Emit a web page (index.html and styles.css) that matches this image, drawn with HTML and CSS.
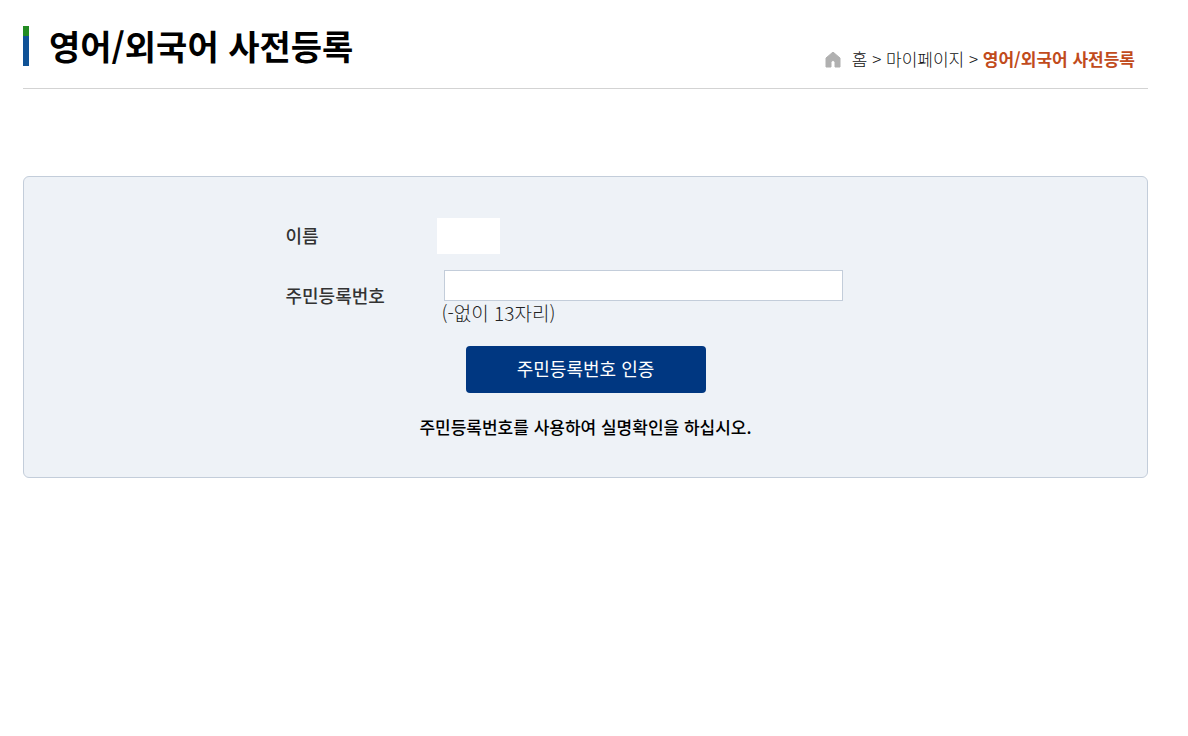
FILE: index.html
```html
<!DOCTYPE html>
<html lang="ko">
<head>
<meta charset="utf-8">
<meta name="viewport" content="width=device-width, initial-scale=1">
<title>영어/외국어 사전등록</title>
<link rel="stylesheet" href="styles.css">
</head>
<body>
<main class="page">
  <header class="page-header">
    <h1 class="page-title">영어/외국어 사전등록</h1>
    <nav class="breadcrumb" aria-label="현재 위치">
      <svg class="home-icon" viewBox="0 0 16 16" aria-hidden="true"><path d="M8 0 L15 6 V15 H10 V10.5 A2 2 0 0 0 6 10.5 V15 H1 V6 Z" fill="#b0b0b0" stroke="#b0b0b0" stroke-linejoin="round"/></svg>
      <a href="#">홈</a> &gt; <a href="#">마이페이지</a> &gt; <strong class="current">영어/외국어 사전등록</strong>
    </nav>
  </header>
  <form class="panel">
    <div class="fields">
      <label class="label" for="name">이름</label>
      <output class="name-value" id="name"></output>
      <label class="label label-rrn" for="rrn">주민등록번호</label>
      <div class="rrn">
        <input class="rrn-input" id="rrn" type="text" maxlength="13" aria-describedby="rrn-hint">
        <span class="hint" id="rrn-hint">(-없이 13자리)</span>
      </div>
    </div>
    <button class="submit" type="button">주민등록번호 인증</button>
    <p class="notice">주민등록번호를 사용하여 실명확인을 하십시오.</p>
  </form>
</main>
</body>
</html>
```
FILE: styles.css
```css
* {
  box-sizing: border-box;
}

body {
  margin: 0;
  background: #fff;
  color: #333;
  font-family: "Noto Sans CJK KR", sans-serif;
}

.page {
  padding: 20px 40px 20px 23px;
}

.page-header {
  display: flex;
  justify-content: space-between;
  align-items: flex-end;
  padding: 0 13px 16px 0;
  border-bottom: 1px solid #d3d3d3;
}

.page-title {
  display: flex;
  align-items: center;
  gap: 20px;
  margin: 0;
  color: #000;
  font-size: 34px;
  font-weight: 700;
  line-height: 52px;
}

.page-title::before {
  content: "";
  width: 6px;
  height: 40px;
  background: linear-gradient(#228b22 10px, #0f5296 10px);
}

.breadcrumb {
  color: #111;
  font-size: 17px;
  font-weight: 300;
  line-height: 26px;
}

.breadcrumb a {
  color: inherit;
  text-decoration: none;
}

.home-icon {
  width: 16px;
  height: 16px;
  margin-right: 6px;
  vertical-align: -2px;
}

.current {
  color: #c14b1c;
  font-weight: 700;
}

.panel {
  display: flex;
  flex-direction: column;
  align-items: center;
  margin-top: 87px;
  padding: 41px 20px 37px;
  border: 1px solid #c3cdda;
  border-radius: 6px;
  background: #eef2f7;
}

.fields {
  display: grid;
  grid-template-columns: 151px minmax(0, 449px);
  row-gap: 16px;
  align-items: center;
}

.label {
  padding-bottom: 2px;
  font-size: 18px;
  font-weight: 500;
  line-height: 26px;
}

.label-rrn {
  padding-bottom: 6px;
}

.name-value {
  width: 63px;
  height: 36px;
  background: #fff;
}

.rrn {
  display: flex;
  flex-direction: column;
  padding-left: 5px;
}

.rrn-input {
  width: 100%;
  max-width: 399px;
  height: 31px;
  margin-left: 2px;
  padding: 0 8px;
  border: 1px solid #c3cdda;
  background: #fff;
  font: inherit;
  font-size: 17px;
}

.hint {
  color: #222;
  font-size: 19px;
  font-weight: 300;
  line-height: 24px;
}

.submit {
  width: 240px;
  height: 47px;
  margin-top: 21px;
  padding: 0 0 4px;
  border: 0;
  border-radius: 4px;
  background: #003781;
  color: #fff;
  font-family: inherit;
  font-size: 18px;
  font-weight: 400;
}

.notice {
  margin: 21px 0 0;
  color: #000;
  font-size: 17px;
  font-weight: 500;
  line-height: 26px;
}
```
